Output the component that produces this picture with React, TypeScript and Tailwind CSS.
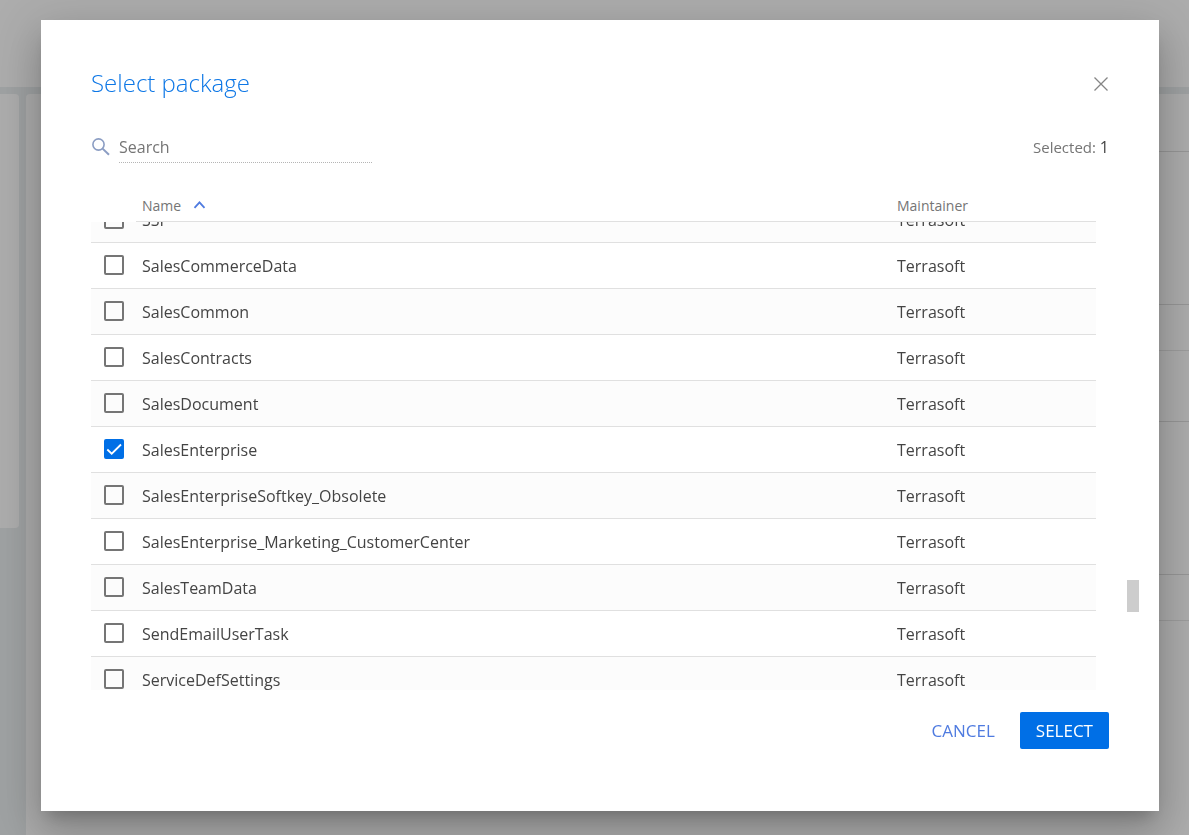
import { useLayoutEffect, useRef, useState } from "react";

const packages = [
  "SSP",
  "SalesCommerceData",
  "SalesCommon",
  "SalesContracts",
  "SalesDocument",
  "SalesEnterprise",
  "SalesEnterpriseSoftkey_Obsolete",
  "SalesEnterprise_Marketing_CustomerCenter",
  "SalesTeamData",
  "SendEmailUserTask",
  "ServiceDefSettings",
];

function PageBehind() {
  return (
    <div aria-hidden="true" className="flex h-screen flex-col bg-[#9fa2a3]">
      <div className="h-[87px] shrink-0 bg-[#adadad]" />
      <div className="flex min-h-0 flex-1 gap-[7px] pt-[7px]">
        <div className="h-[434px] w-[19px] shrink-0 rounded-r bg-[#adadad]" />
        <div className="flex-1 rounded-tl bg-[#adadad] pl-6">
          <div className="h-[58px] border-b border-[#979797]" />
          <div className="h-[153px] border-b border-[#979797]" />
          <div className="h-[46px] border-b border-[#9d9d9d]" />
          <div className="h-[71px] border-b border-[#979797]" />
          <div className="h-[153px] border-b border-[#979797]" />
          <div className="h-[46px] border-b border-[#9d9d9d]" />
        </div>
      </div>
    </div>
  );
}

function PackageTable({
  selected,
  onToggle,
}: {
  selected: string[];
  onToggle: (name: string) => void;
}) {
  const scroller = useRef<HTMLDivElement>(null);

  useLayoutEffect(() => {
    if (scroller.current) scroller.current.scrollTop = 25;
  }, []);

  return (
    <div
      ref={scroller}
      className="mr-[13px] mt-[27px] min-h-0 flex-1 overflow-y-auto [scrollbar-width:none]"
    >
      <table className="w-full table-fixed border-separate border-spacing-0 text-left">
        <thead className="sticky top-0 z-10 bg-white text-sm text-[#757575]">
          <tr className="h-8">
            <th aria-label="Selection" className="w-[45px] p-0" />
            <th className="border-b border-[#e0e0e0] p-0 pl-1.5 font-normal">
              <button type="button" className="flex items-center gap-3">
                Name
                <svg width="14" height="12" viewBox="0 0 14 12" fill="none" stroke="#4f7be0" strokeWidth="1.8">
                  <path d="M1.5 7.8L6.5 2.3L11.5 7.8" />
                </svg>
              </button>
            </th>
            <th className="w-[205px] border-b border-[#e0e0e0] p-0 pl-1.5 font-normal">Maintainer</th>
          </tr>
        </thead>
        <tbody className="text-base text-[#444444]">
          {packages.map((name) => (
            <tr key={name} className="h-[46px] odd:bg-[#fcfcfc]">
              <td className="border-b border-[#e0e0e0] p-0 pb-0.5 pl-[13px]">
                <span className="relative block size-5">
                  <input
                    type="checkbox"
                    id={name}
                    checked={selected.includes(name)}
                    onChange={() => onToggle(name)}
                    className="peer block size-5 appearance-none rounded-xs border-2 border-[#757575] checked:border-[#006fe6] checked:bg-[#006fe6]"
                  />
                  <svg
                    viewBox="0 0 20 20"
                    fill="none"
                    stroke="white"
                    strokeWidth="1.8"
                    className="pointer-events-none absolute inset-0 hidden size-5 peer-checked:block"
                  >
                    <path d="M3.3 10.5L7.7 14.7L17 5.5" />
                  </svg>
                </span>
              </td>
              <td className="border-b border-[#e0e0e0] p-0 pl-1.5">
                <label htmlFor={name}>{name}</label>
              </td>
              <td className="border-b border-[#e0e0e0] p-0 pl-1.5">Terrasoft</td>
            </tr>
          ))}
        </tbody>
      </table>
    </div>
  );
}

export default function App() {
  const [selected, setSelected] = useState<string[]>(["SalesEnterprise"]);
  const toggle = (name: string) =>
    setSelected((current) =>
      current.includes(name) ? current.filter((n) => n !== name) : [...current, name],
    );

  return (
    <div className="font-['Open_Sans',sans-serif]">
      <PageBehind />
      <div className="fixed inset-0 flex pb-6 pl-[41px] pr-[30px] pt-5">
        <div
          role="dialog"
          aria-modal="true"
          aria-labelledby="dialog-title"
          className="relative flex min-w-0 flex-1 flex-col bg-white px-[50px] pb-[62px] pt-[45px] shadow-[0_11px_15px_-7px_rgba(0,0,0,0.2),0_24px_38px_3px_rgba(0,0,0,0.14),0_9px_46px_8px_rgba(0,0,0,0.12)]"
        >
          <header className="flex items-center justify-between">
            <h1 id="dialog-title" className="text-2xl leading-9 font-light text-[#0d77e6]">
              Select package
            </h1>
            <button type="button" aria-label="Close" className="-mr-px">
              <svg width="18" height="18" viewBox="0 0 18 18" fill="none" stroke="#858585" strokeWidth="1.3">
                <path d="M2.5 3.5L15.5 16.5M15.5 3.5L2.5 16.5" />
              </svg>
            </button>
          </header>

          <div className="mt-[30px] flex items-center justify-between">
            <div className="flex items-center gap-2">
              <svg width="20" height="18" viewBox="0 0 20 18" fill="none" stroke="#8b9dc3" strokeWidth="1.6">
                <circle cx="7.5" cy="6.5" r="5.6" />
                <path d="M11.6 10.6L18 16.8" strokeWidth="2" />
              </svg>
              <input
                type="text"
                aria-label="Search"
                placeholder="Search"
                className="h-8 w-[253px] border-b border-dotted border-[#b5b5b5] text-base text-[#444444] outline-none placeholder:text-[#757575]"
              />
            </div>
            <p className="text-[15px] text-[#757575]">
              Selected: <span className="text-base text-[#444444]">{selected.length}</span>
            </p>
          </div>

          <PackageTable selected={selected} onToggle={toggle} />

          <footer className="mt-[22px] flex justify-end gap-[9px] text-[17px]">
            <button type="button" className="h-[37px] px-4 text-[#4f7be0]">
              CANCEL
            </button>
            <button type="button" className="h-[37px] rounded-xs bg-[#006fe6] px-4 text-white">
              SELECT
            </button>
          </footer>

          <div className="absolute right-5 bottom-[199px] h-8 w-3 bg-[#cdcdcd]" />
        </div>
      </div>
    </div>
  );
}
